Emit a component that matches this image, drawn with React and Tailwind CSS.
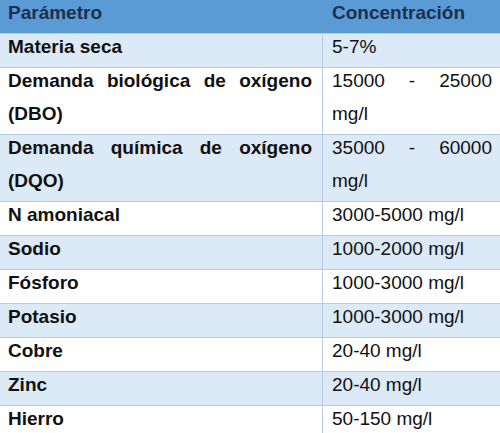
import React from "react";

const rows = [
  { name: "Materia seca", value: "5-7%" },
  { name: "Demanda biológica de oxígeno (DBO)", value: "15000 - 25000 mg/l" },
  { name: "Demanda química de oxígeno (DQO)", value: "35000 - 60000 mg/l" },
  { name: "N amoniacal", value: "3000-5000 mg/l" },
  { name: "Sodio", value: "1000-2000 mg/l" },
  { name: "Fósforo", value: "1000-3000 mg/l" },
  { name: "Potasio", value: "1000-3000 mg/l" },
  { name: "Cobre", value: "20-40 mg/l" },
  { name: "Zinc", value: "20-40 mg/l" },
  { name: "Hierro", value: "50-150 mg/l" },
];

const App = () => {
  return (
    <div className="w-[500px] h-[433px] overflow-hidden bg-white font-['Liberation_Sans',Arial,sans-serif] text-[19px] text-[#111]">
      {/* header */}
      <div className="flex bg-[#5b9bd5] text-[#1b2f52] font-bold">
        <div className="w-[322px] shrink-0 pl-[8px] pr-[10px] pb-[4px]">
          <p className="-mt-[4px] leading-[33px]">Parámetro</p>
        </div>
        <div className="flex-1 pl-[10px] pr-[8px] pb-[4px]">
          <p className="-mt-[4px] leading-[33px]">Concentración</p>
        </div>
      </div>

      {rows.map((row, index) => (
        <div
          key={index}
          className={
            index % 2 === 0
              ? "flex border-t border-[#b5cbe6] bg-[#dce9f6]"
              : "flex border-t border-[#b5cbe6] bg-white"
          }
        >
          <div className="w-[322px] shrink-0 pl-[8px] pr-[10px] pb-[4px] font-bold text-justify">
            <p className="-mt-[4px] leading-[33px]">{row.name}</p>
          </div>
          <div className="flex-1 border-l border-[#b5cbe6] pl-[9px] pr-[8px] pb-[4px] text-justify">
            <p className="-mt-[4px] leading-[33px]">{row.value}</p>
          </div>
        </div>
      ))}
    </div>
  );
};

export default App;
